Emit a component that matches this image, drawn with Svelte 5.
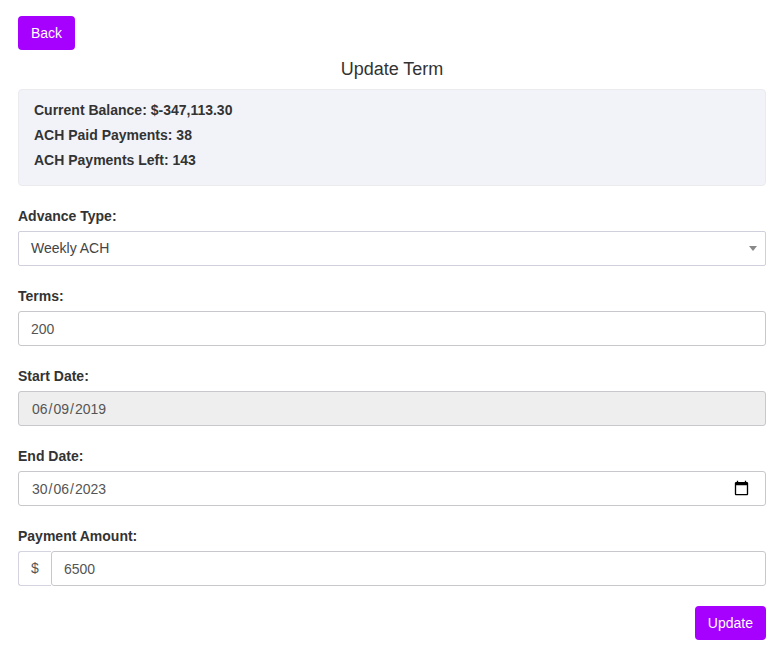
<script>
  let terms = $state('200');
  let amount = $state('6500');

  const summary = [
    'Current Balance: $-347,113.30',
    'ACH Paid Payments: 38',
    'ACH Payments Left: 143'
  ];
  const startDate = ['06', '09', '2019'];
  const endDate = ['30', '06', '2023'];
</script>

{#snippet dateParts(parts)}
  <span class="date">
    {#each parts as part, i}{#if i > 0}<span>/</span>{/if}<span class="part">{part}</span>{/each}
  </span>
{/snippet}

<main>
  <button class="btn" type="button">Back</button>
  <h4>Update Term</h4>

  <section class="well">
    {#each summary as line}
      <p>{line}</p>
    {/each}
  </section>

  <form>
    <div class="group">
      <label for="type">Advance Type:</label>
      <div class="control select" id="type" role="combobox" aria-expanded="false" aria-controls="type" tabindex="0">
        <span>Weekly ACH</span>
        <i class="caret"></i>
      </div>
    </div>

    <div class="group">
      <label for="terms">Terms:</label>
      <input class="control" id="terms" bind:value={terms} />
    </div>

    <div class="group">
      <span class="label">Start Date:</span>
      <div class="control disabled">{@render dateParts(startDate)}</div>
    </div>

    <div class="group">
      <span class="label">End Date:</span>
      <div class="control">
        {@render dateParts(endDate)}
        <svg class="calendar" viewBox="0 0 24 24" aria-hidden="true">
          <path d="M20 3h-1V1h-2v2H7V1H5v2H4c-1.1 0-2 .9-2 2v16c0 1.1.9 2 2 2h16c1.1 0 2-.9 2-2V5c0-1.1-.9-2-2-2zm0 18H4V8h16v13z" />
        </svg>
      </div>
    </div>

    <div class="group">
      <label for="amount">Payment Amount:</label>
      <div class="input-group">
        <span class="addon">$</span>
        <input class="control" id="amount" bind:value={amount} />
      </div>
    </div>

    <div class="actions">
      <button class="btn" type="button">Update</button>
    </div>
  </form>
</main>

<style>
  :global(body) {
    background: #fff;
  }
  main {
    padding: 16px 14px 0 18px;
    font: 14px/20px 'Liberation Sans', Arial, sans-serif;
    color: #333;
  }
  main * {
    box-sizing: border-box;
  }
  .btn {
    display: block;
    height: 34px;
    padding: 0 13px;
    border: 0;
    border-radius: 4px;
    background: #a600ff;
    color: #fff;
    font: inherit;
  }
  h4 {
    margin: 9px 0 10px;
    font-size: 18px;
    font-weight: 400;
    line-height: 20px;
    text-align: center;
  }
  .well {
    height: 97px;
    padding: 10px 15px;
    border: 1px solid #ebebee;
    border-radius: 4px;
    background: #f2f3f9;
    font-weight: 700;
  }
  .well p {
    margin: 0 0 5px;
  }
  form {
    margin-top: 20px;
  }
  .group {
    margin-bottom: 20px;
  }
  label,
  .label {
    display: block;
    margin-bottom: 5px;
    font-weight: 700;
  }
  .control {
    display: flex;
    align-items: center;
    width: 100%;
    height: 35px;
    padding: 1px 12px 0;
    border: 1px solid #c8c8cc;
    border-radius: 3px;
    background: #fff;
    color: #555;
    font: inherit;
    outline: 0;
  }
  .select {
    justify-content: space-between;
    padding: 0 8px 1px 12px;
    border-color: #cfd0db;
    border-radius: 2px;
    color: #444;
  }
  .caret {
    border: 4px solid transparent;
    border-top: 5px solid #888;
    border-bottom: 0;
  }
  .disabled {
    background: #eee;
  }
  .date {
    display: flex;
  }
  .part {
    padding: 0 1px;
  }
  .calendar {
    width: 17px;
    height: 16px;
    margin: 0 3px 2px auto;
    fill: #000;
  }
  .input-group {
    display: flex;
  }
  .addon {
    width: 33px;
    flex: none;
    padding: 6px 0 0 12px;
    border: 1px solid #d3d4e0;
    border-right: 0;
    border-radius: 3px 0 0 3px;
    color: #555;
  }
  .actions {
    display: flex;
    justify-content: flex-end;
  }
</style>
